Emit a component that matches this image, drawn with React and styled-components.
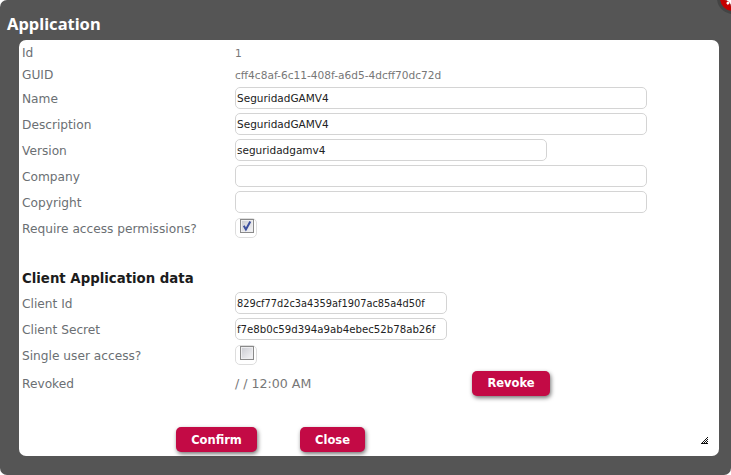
import React from "react";
import styled, { createGlobalStyle } from "styled-components";

const Global = createGlobalStyle`
  html, body { margin: 0; padding: 0; background: #fff; }
  body { font-family: "DejaVu Sans", Verdana, sans-serif; }
`;
const Dialog = styled.div`
  position: relative;
  width: 731px;
  height: 475px;
  box-sizing: border-box;
  background: #555;
  border-radius: 7px;
  padding: 13px 12px 19px 19px;
  overflow: hidden;
`;
const Title = styled.h1`
  margin: 0 0 0 -12px;
  height: 27px;
  font-family: "Noto Sans", sans-serif;
  font-size: 16.5px;
  line-height: 21px;
  font-weight: 700;
  color: #fff;
`;
const Panel = styled.div`
  position: relative;
  height: 416px;
  box-sizing: border-box;
  background: #fff;
  border-radius: 7px;
  padding: 1px 0 0 3px;
`;
const Row = styled.div`
  display: flex;
  align-items: center;
  height: ${p => p.$h || 26}px;
`;
const Label = styled.label`
  width: 213px;
  flex: none;
  padding-top: 2px;
  font-size: 12.2px;
  color: #6b6f73;
`;
const Value = styled.span`
  width: ${p => p.$w || "auto"};
  padding-top: 1px;
  font-size: ${p => p.$size || 10.6}px;
  color: #777;
`;
const Input = styled.input`
  box-sizing: border-box;
  width: ${p => p.$w}px;
  height: 22px;
  padding: 0 1px;
  border: 1px solid #d4d4d4;
  border-radius: 5px;
  background: #fff;
  font: ${p => p.$size || 10.5}px "DejaVu Sans", sans-serif;
  color: #222;
  outline: none;
`;
const CheckWrap = styled.span`
  display: block;
  box-sizing: border-box;
  width: 22px;
  height: 20px;
  padding: 0 0 0 4px;
  border: 1px solid #ddd;
  border-radius: 5px;
`;
const CheckBox = styled.span`
  display: block;
  box-sizing: border-box;
  width: 14px;
  height: 14px;
  border: 1px solid #8a8a8a;
  background: linear-gradient(135deg, #c9cad0, #f6f6f8);
  box-shadow: inset 0 0 0 1px #eeeef0;
`;
const CheckMark = styled.svg`
  display: block;
`;
const Heading = styled.h2`
  margin: 0;
  font-size: 13.3px;
  line-height: 22px;
  font-weight: 700;
  color: #1c1c1c;
`;
const Spacer = styled.div`
  height: ${p => p.$h}px;
`;
const Button = styled.button`
  width: ${p => p.$w}px;
  height: 25px;
  padding: 0;
  border: 0;
  border-radius: 5px;
  background: #c30a45;
  color: #fff;
  font: 700 11.5px "DejaVu Sans", sans-serif;
  box-shadow: 1px 2px 4px rgba(0, 0, 0, 0.55);
`;
const Footer = styled.div`
  display: flex;
  gap: 43px;
  padding: 29px 0 0 154px;
`;
const Grip = styled.svg`
  position: absolute;
  right: 11px;
  bottom: 12px;
`;
const CloseIcon = styled.svg`
  position: absolute;
  left: 716px;
  top: -19px;
`;

const gripPath = (() => {
  let d = "";
  for (let y = 0; y < 7; y++)
    for (let x = 6 - y; x < 7; x++)
      if ((x + y) % 2 === 0 || y === 6) d += `M${x} ${y}h1v1h-1z`;
  return d;
})();

const Check = () => (
  <CheckMark width="12" height="12" viewBox="0 0 12 12">
    <path d="M2.8 5.8 L4.9 9.5 L9.3 1.5" fill="none" stroke="#3c4f9e" strokeWidth="2" />
  </CheckMark>
);

const Field = ({ label, value, w = 412, size }) => (
  <Row>
    <Label>{label}</Label>
    <Input $w={w} $size={size} defaultValue={value} />
  </Row>
);
const CheckRow = ({ label, checked }) => (
  <Row>
    <Label>{label}</Label>
    <CheckWrap>
      <CheckBox>{checked && <Check />}</CheckBox>
    </CheckWrap>
  </Row>
);

export default function App() {
  return (
    <>
      <Global />
      <Dialog>
        <Title>Application</Title>
        <CloseIcon width="34" height="34" viewBox="0 0 34 34">
          <circle cx="17" cy="17" r="14.5" fill="#c40000" stroke="#444" strokeWidth="3" />
          <path d="M11 23 L15 19 M15 19 L12 19.5 M15 19 L15 22" stroke="#fff" strokeWidth="2.5" fill="none" />
        </CloseIcon>
        <Panel>
          <Row $h={22}><Label>Id</Label><Value>1</Value></Row>
          <Row $h={22}><Label>GUID</Label><Value>cff4c8af-6c11-408f-a6d5-4dcff70dc72d</Value></Row>
          <Field label="Name" value="SeguridadGAMV4" />
          <Field label="Description" value="SeguridadGAMV4" />
          <Field label="Version" value="seguridadgamv4" w={312} />
          <Field label="Company" value="" />
          <Field label="Copyright" value="" />
          <CheckRow label="Require access permissions?" checked />
          <Spacer $h={27} />
          <Heading>Client Application data</Heading>
          <Field label="Client Id" value="829cf77d2c3a4359af1907ac85a4d50f" w={212} size={9.8} />
          <Field label="Client Secret" value="f7e8b0c59d394a9ab4ebec52b78ab26f" w={212} size={10.2} />
          <CheckRow label="Single user access?" />
          <Row $h={30}>
            <Label>Revoked</Label>
            <Value $size={12.6} $w="237px">/ / 12:00 AM</Value>
            <Button $w={78}>Revoke</Button>
          </Row>
          <Footer>
            <Button $w={81}>Confirm</Button>
            <Button $w={65}>Close</Button>
          </Footer>
          <Grip width="7" height="7" viewBox="0 0 7 7" shapeRendering="crispEdges">
            <path d={gripPath} fill="#111" />
          </Grip>
        </Panel>
      </Dialog>
    </>
  );
}
